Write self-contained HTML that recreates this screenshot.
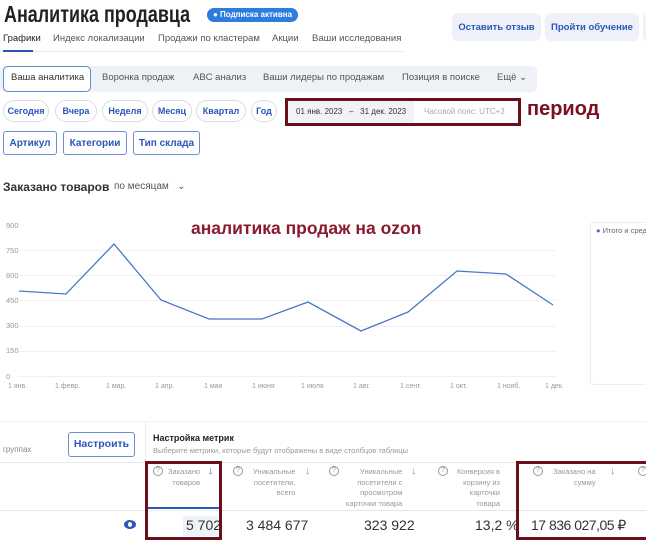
<!DOCTYPE html>
<html><head><meta charset="utf-8"><style>
*{margin:0;padding:0;box-sizing:border-box}
body{width:646px;height:540px;overflow:hidden;background:#fff;font-family:"Liberation Sans",sans-serif;position:relative;color:#1a1a1a}
.a{position:absolute;white-space:nowrap}
.btn{position:absolute;background:#eef2f8;border-radius:6px;color:#2a56b8;font-size:9.5px;font-weight:bold;display:flex;align-items:center;justify-content:center;white-space:nowrap}
.pill{position:absolute;top:100px;height:22px;border:1px solid #d8dde6;border-radius:11px;color:#2a56b8;font-size:9px;font-weight:bold;display:flex;align-items:center;justify-content:center}
.ob{position:absolute;top:131px;height:24px;border:1px solid #6d8ed0;border-radius:3px;color:#2a56b8;font-size:10px;font-weight:bold;display:flex;align-items:center;justify-content:center}
.t{font-size:9.5px;color:#333;top:72px}
.yl{position:absolute;left:6px;font-size:7.5px;color:#999}
.xl{position:absolute;top:383px;font-size:7px;color:#999}
.mh{position:absolute;top:467px;font-size:7.5px;color:#999;text-align:right;line-height:10.5px}
.q{position:absolute;top:466px;width:10px;height:10px;border:1px solid #999;border-radius:50%;font-size:7px;color:#999;text-align:center;line-height:8px}
.num{position:absolute;top:517px;font-size:14px;color:#333}
.red{position:absolute;border:3px solid #6b0f1a}
.tab{position:absolute;top:33px;font-size:9.5px;color:#555;white-space:nowrap}
</style></head><body>
<div class="a" style="left:4px;top:1px;font-size:23px;font-weight:bold;color:#222;transform:scaleX(0.78);transform-origin:0 0">Аналитика продавца</div>
<div class="a" style="left:207px;top:8px;height:14px;padding:0 6px;background:#2d7de0;border-radius:7px;color:#fff;font-size:8px;font-weight:bold;line-height:14px">● Подписка активна</div>
<div class="btn" style="left:452px;top:13px;width:89px;height:28px">Оставить отзыв</div>
<div class="btn" style="left:545px;top:13px;width:94px;height:28px">Пройти обучение</div>
<div class="btn" style="left:643px;top:13px;width:10px;height:28px"></div>
<div class="tab" style="left:3px;color:#222">Графики</div>
<div class="tab" style="left:53px">Индекс локализации</div>
<div class="tab" style="left:158px">Продажи по кластерам</div>
<div class="tab" style="left:272px">Акции</div>
<div class="tab" style="left:312px">Ваши исследования</div>
<div class="a" style="left:0;top:51px;width:403px;height:1px;background:#e3e6ea"></div>
<div class="a" style="left:3px;top:50px;width:30px;height:2px;background:#2a56b8"></div>
<div class="a" style="left:0;top:66px;width:537px;height:26px;background:#eef1f5;border-radius:5px"></div>
<div class="a" style="left:3px;top:66px;width:88px;height:26px;background:#fff;border:1px solid #5a8fcc;border-radius:5px"></div>
<div class="a t" style="left:11px">Ваша аналитика</div>
<div class="a t" style="left:102px;color:#555">Воронка продаж</div>
<div class="a t" style="left:193px;color:#555">ABC анализ</div>
<div class="a t" style="left:263px;color:#555">Ваши лидеры по продажам</div>
<div class="a t" style="left:402px;color:#555">Позиция в поиске</div>
<div class="a t" style="left:497px;color:#555">Ещё ⌄</div>
<div class="pill" style="left:3px;width:46px">Сегодня</div>
<div class="pill" style="left:55px;width:42px">Вчера</div>
<div class="pill" style="left:102px;width:46px">Неделя</div>
<div class="pill" style="left:152px;width:40px">Месяц</div>
<div class="pill" style="left:196px;width:50px">Квартал</div>
<div class="pill" style="left:251px;width:26px">Год</div>
<div class="a" style="left:286px;top:101px;width:128px;height:21px;background:#f1f3f6"></div>
<div class="a" style="left:296px;top:107px;font-size:8px;color:#333">01 янв. 2023 &nbsp;&nbsp;– &nbsp;&nbsp;31 дек. 2023</div>
<div class="a" style="left:424px;top:107px;font-size:8px;color:#aaa">Часовой пояс: UTC+3</div>
<div class="red" style="left:285px;top:98px;width:236px;height:28px"></div>
<div class="a" style="left:527px;top:98px;font-size:20px;font-weight:bold;color:#7a1020">период</div>
<div class="ob" style="left:3px;width:54px">Артикул</div>
<div class="ob" style="left:63px;width:64px">Категории</div>
<div class="ob" style="left:133px;width:67px">Тип склада</div>
<div class="a" style="left:3px;top:180px;font-size:12px;font-weight:bold;color:#333">Заказано товаров</div>
<div class="a" style="left:114px;top:181px;font-size:10px;color:#555">по месяцам &nbsp;&nbsp;⌄</div>
<div class="a" style="left:191px;top:218px;font-size:17.5px;font-weight:bold;color:#8a1a2e">аналитика продаж на ozon</div>
<div class="yl" style="top:221px">900</div><div class="yl" style="top:246px">750</div><div class="yl" style="top:271px">600</div><div class="yl" style="top:296px">450</div><div class="yl" style="top:321px">300</div><div class="yl" style="top:346px">150</div><div class="yl" style="top:372px">0</div>
<svg class="a" style="left:0;top:0" width="646" height="540">
<g stroke="#f0f0f0" stroke-width="1">
<line x1="18" x2="556" y1="250.5" y2="250.5"/><line x1="18" x2="556" y1="275.5" y2="275.5"/><line x1="18" x2="556" y1="300.5" y2="300.5"/><line x1="18" x2="556" y1="326.5" y2="326.5"/><line x1="18" x2="556" y1="351.5" y2="351.5"/><line x1="18" x2="556" y1="376.5" y2="376.5"/>
</g>
<polyline fill="none" stroke="#4a78c8" stroke-width="1.3" points="19,291 66,294 114,244 161,300 209,319 262,319 308,302 361,331 408,312 457,271 506,274 553,305"/>
</svg>
<div class="xl" style="left:8px">1 янв.</div><div class="xl" style="left:55px">1 февр.</div><div class="xl" style="left:106px">1 мар.</div><div class="xl" style="left:155px">1 апр.</div><div class="xl" style="left:204px">1 мая</div><div class="xl" style="left:252px">1 июня</div><div class="xl" style="left:301px">1 июля</div><div class="xl" style="left:353px">1 авг.</div><div class="xl" style="left:400px">1 сент.</div><div class="xl" style="left:450px">1 окт.</div><div class="xl" style="left:497px">1 нояб.</div><div class="xl" style="left:545px">1 дек.</div>
<div class="a" style="left:590px;top:222px;width:60px;height:163px;border:1px solid #eee;border-radius:3px"></div>
<div class="a" style="left:596px;top:226px;font-size:7.5px;color:#666"><span style="color:#3d6fd0">●</span> Итого и средн</div>
<div class="a" style="left:0;top:421px;width:646px;height:1px;background:#f0f0f0"></div>
<div class="a" style="left:3px;top:445px;font-size:8px;color:#888">группах</div>
<div class="a" style="left:68px;top:432px;width:67px;height:25px;border:1px solid #6d8ed0;border-radius:3px;color:#2a56b8;font-size:10.5px;font-weight:bold;text-align:center;line-height:23px">Настроить</div>
<div class="a" style="left:145px;top:422px;width:1px;height:40px;background:#eee"></div>
<div class="a" style="left:153px;top:433px;font-size:9px;font-weight:bold;color:#222">Настройка метрик</div>
<div class="a" style="left:153px;top:446px;font-size:7.5px;color:#999">Выберите метрики, которые будут отображены в виде столбцов таблицы</div>
<div class="a" style="left:0;top:462px;width:646px;height:1px;background:#e6e6e6"></div>
<div class="a" style="left:0;top:510px;width:646px;height:1px;background:#e6e6e6"></div>
<div class="a" style="left:148px;top:507px;width:72px;height:2px;background:#2a56b8"></div>
<div class="q" style="left:153px">?</div><div class="mh" style="left:168px">Заказано<br>товаров</div><div class="a" style="left:208px;top:465px;color:#3d6fd0;font-size:11px">↓</div>
<div class="q" style="left:233px">?</div><div class="mh" style="left:253px">Уникальные<br>посетители,<br>всего</div><div class="a" style="left:305px;top:465px;color:#999;font-size:11px">↓</div>
<div class="q" style="left:329px">?</div><div class="mh" style="left:346px">Уникальные<br>посетители с<br>просмотром<br>карточки товара</div><div class="a" style="left:411px;top:465px;color:#999;font-size:11px">↓</div>
<div class="q" style="left:438px">?</div><div class="mh" style="left:457px">Конверсия в<br>корзину из<br>карточки<br>товара</div><div class="q" style="left:533px">?</div><div class="mh" style="left:553px">Заказано на<br>сумму</div><div class="a" style="left:610px;top:465px;color:#999;font-size:11px">↓</div><div class="q" style="left:638px">?</div>
<div class="a" style="left:124px;top:520px;width:12px;height:9px;border-radius:50%;background:#2a56b8"></div>
<div class="a" style="left:128px;top:522px;width:4px;height:5px;border-radius:50%;background:#fff"></div>
<div class="a" style="left:183px;top:516px;width:35px;height:20px;background:#eef3fa"></div>
<div class="num" style="left:186px">5 702</div>
<div class="num" style="left:246px">3 484 677</div>
<div class="num" style="left:364px">323 922</div>
<div class="num" style="left:475px">13,2 %</div>
<div class="num" style="left:531px;letter-spacing:-0.5px">17 836 027,05 ₽</div>
<div class="red" style="left:145px;top:461px;width:77px;height:79px"></div>
<div class="red" style="left:516px;top:461px;width:134px;height:79px"></div>
</body></html>
